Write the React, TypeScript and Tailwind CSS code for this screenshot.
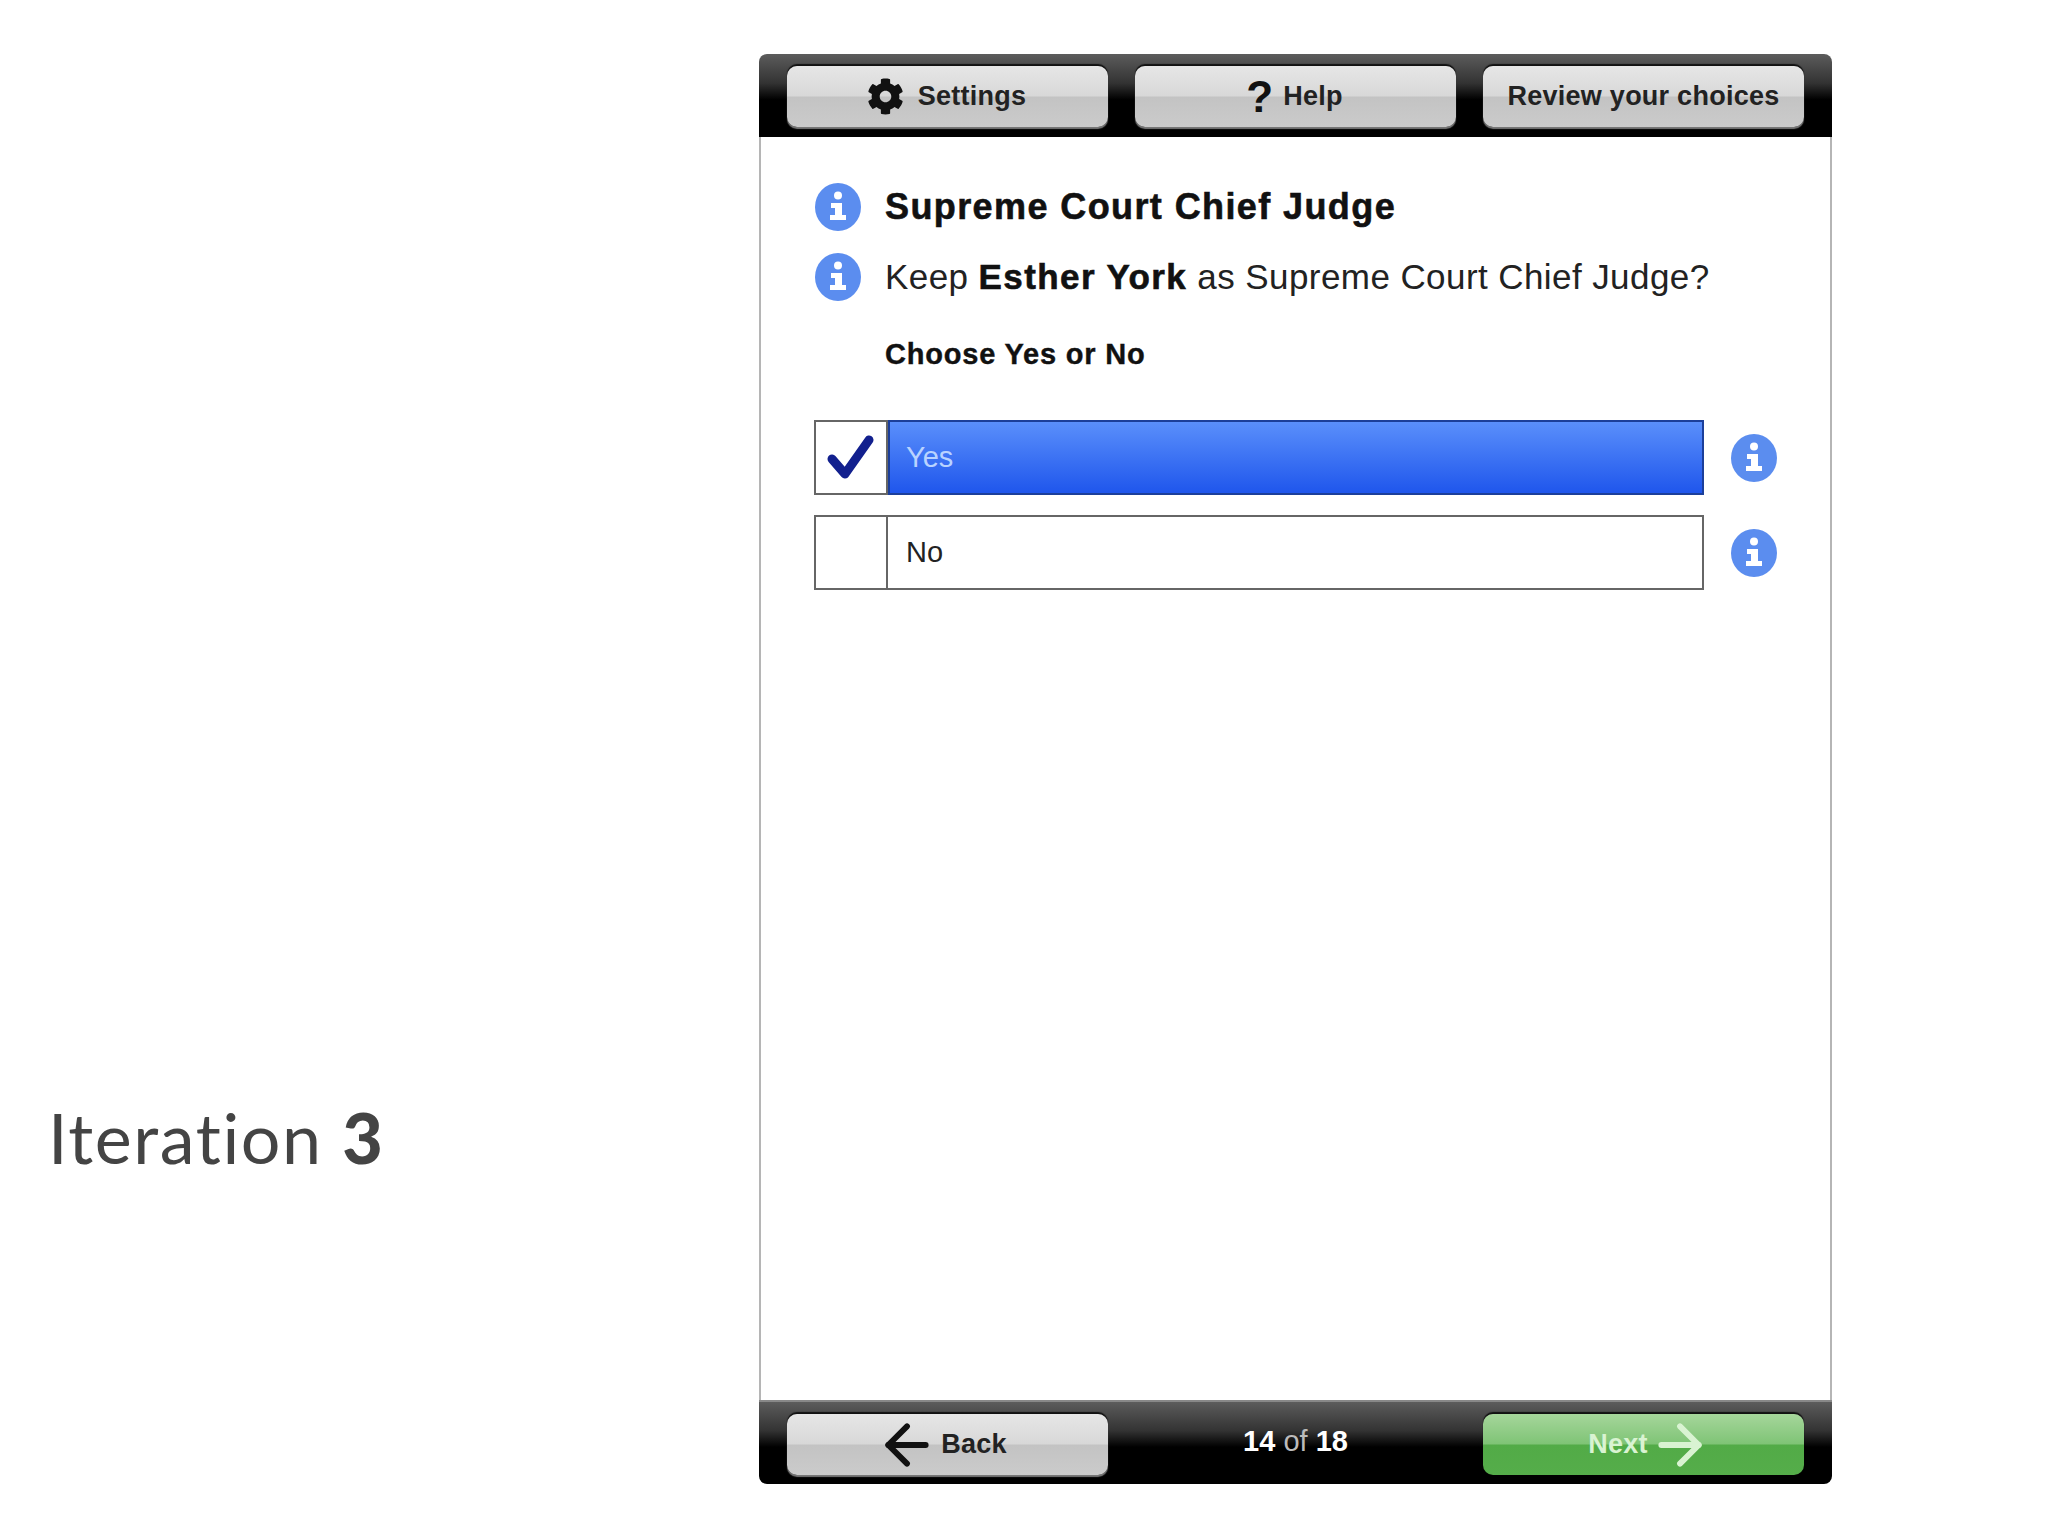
import React from "react";
import { FaCog } from "react-icons/fa";
import { ArrowLeft, ArrowRight } from "lucide-react";

function Info() {
  return (
    <svg width="46" height="48" viewBox="0 0 46 48" className="shrink-0 block">
      <ellipse cx="23" cy="24" rx="23" ry="24" fill="#5b8def" />
      <circle cx="23" cy="12.5" r="4" fill="#fff" />
      <path d="M16 20h11v12h4v5H15v-5h5v-7h-4z" fill="#fff" />
    </svg>
  );
}

const grey =
  "bg-[linear-gradient(#e6e6e6,#d8d8d8_49%,#c3c3c3_51%,#cbcbcb)] text-[#222] shadow-[0_-2px_1px_#111,0_2px_1px_#777]";
const btn =
  "w-[321px] h-[61px] rounded-[10px] flex items-center justify-center font-bold text-[27px] tracking-[0.25px]";

function Bar({ children, top }: { children: React.ReactNode; top: boolean }) {
  return (
    <div
      className={`${top ? "h-[83px] rounded-t-[8px] pt-[12px] items-start" : "h-[84px] rounded-b-[8px] pt-[12px] items-start border-t-2 border-[#888]"} flex justify-between px-[28px] bg-[linear-gradient(#5c5c5c,#333_35%,#000_55%,#000)]`}
    >
      {children}
    </div>
  );
}

function Option({ label, on }: { label: string; on?: boolean }) {
  return (
    <div className="flex items-center">
      <div className="flex w-[890px] h-[75px] border-2 border-[#666] bg-white">
        <div className="w-[72px] flex items-center justify-center border-r-2 border-[#666]">
          {on && (
            <svg width="50" height="52" viewBox="0 0 50 52">
              <path d="M6 27l13 15L43 8" fill="none" stroke="#12208e" strokeWidth="9" strokeLinejoin="round" strokeLinecap="round" />
            </svg>
          )}
        </div>
        <div
          className={`flex-1 flex items-center text-[29px] ${on ? "pl-[16px] bg-[linear-gradient(#5a8ffb,#1f56ec)] text-[#b9d3ff] -my-[2px] -mr-[2px] border-2 border-[#1c3f9a]" : "pl-[18px] text-[#222]"}`}
        >
          {label}
        </div>
      </div>
      <div className="ml-[27px]">
        <Info />
      </div>
    </div>
  );
}

export default function App() {
  return (
    <div className="w-[2048px] h-[1536px] bg-white flex font-['Liberation_Sans',Arial,sans-serif]">
      <div className="w-[759px] shrink-0 pl-[48px] pt-[1095px]">
        <div className="font-['Lato',sans-serif] text-[70px] leading-[84px] tracking-[1.6px] text-[#444] font-normal whitespace-nowrap">
          Iteration <span className="font-black">3</span>
        </div>
      </div>
      <div className="w-[1073px] h-[1430px] mt-[54px] flex flex-col">
        <Bar top>
          <div className={`${btn} ${grey}`}>
            <FaCog className="text-[37px] mr-[14px] -ml-[2px] text-[#111]" />
            Settings
          </div>
          <div className={`${btn} ${grey}`}>
            <span className="text-[44px] mr-[10px] -ml-[2px] text-[#111]">?</span>
            Help
          </div>
          <div className={`${btn} ${grey}`}>Review your choices</div>
        </Bar>
        <div className="flex-1 border-x-2 border-[#b5b5b5] bg-white pl-[54px] pt-[46px]">
          <div className="flex items-center gap-[24px] h-[48px]">
            <Info />
            <div className="font-bold text-[36px] tracking-[1.4px] [-webkit-text-stroke:0.6px_#111] text-[#111]">Supreme Court Chief Judge</div>
          </div>
          <div className="flex items-center gap-[24px] h-[48px] mt-[22px]">
            <Info />
            <div className="text-[35px] tracking-[0.42px] text-[#222]">
              Keep <b className="text-[#111] tracking-[1.4px] [-webkit-text-stroke:0.6px_#111]">Esther York</b> as Supreme Court Chief Judge?
            </div>
          </div>
          <div className="font-bold text-[29px] tracking-[0.8px] [-webkit-text-stroke:0.4px_#111] text-[#111] ml-[70px] mt-[35px] leading-[36px]">Choose Yes or No</div>
          <div className="-ml-px flex flex-col gap-[20px] mt-[48px]">
            <Option label="Yes" on />
            <Option label="No" />
          </div>
        </div>
        <Bar top={false}>
          <div className={`${btn} ${grey}`}>
            <ArrowLeft size={64} strokeWidth={2.2} className="-my-2 mr-[2px] -ml-[13px] text-[#111]" />
            Back
          </div>
          <div className="text-white text-[29px] mt-[6px]">
            <b>14</b> <span className="text-[#bbb]">of</span> <b>18</b>
          </div>
          <div className={`${btn} bg-[linear-gradient(#a6d69b,#7fc476_49%,#52ab47_51%,#55ad4a)] text-[#d9f3d2] shadow-[0_-2px_1px_#111]`}>
            Next
            <ArrowRight size={64} strokeWidth={2.2} className="-my-2 ml-0 -mr-[13px]" />
          </div>
        </Bar>
      </div>
    </div>
  );
}
